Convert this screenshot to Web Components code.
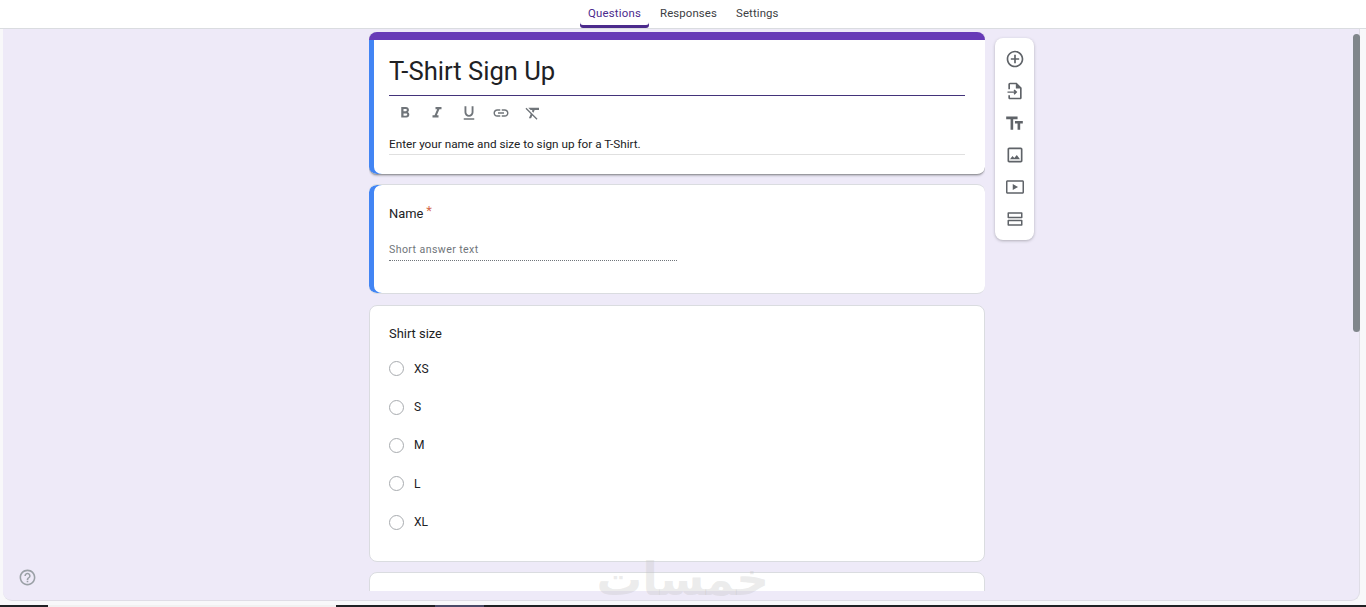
<!DOCTYPE html>
<html lang="en">
<head>
<meta charset="utf-8">
<title>T-Shirt Sign Up</title>
<style>
  html, body { margin: 0; height: 607px; overflow: hidden; }
  body { font-family: Roboto, "Liberation Sans", sans-serif; color: #202124; background: #f8f8fa; }
</style>
</head>
<body>
<form-page>
  <tab-bar slot="top">
    <tab-item active>Questions</tab-item>
    <tab-item>Responses</tab-item>
    <tab-item>Settings</tab-item>
  </tab-bar>

  <form-card kind="header">
    <title-editor heading="T-Shirt Sign Up" text="Enter your name and size to sign up for a T-Shirt."></title-editor>
  </form-card>

  <form-card kind="active" style="height:110px">
    <question-title required>Name</question-title>
    <short-answer>Short answer text</short-answer>
  </form-card>

  <form-card style="height:257px">
    <question-title>Shirt size</question-title>
    <radio-option>XS</radio-option>
    <radio-option>S</radio-option>
    <radio-option>M</radio-option>
    <radio-option>L</radio-option>
    <radio-option>XL</radio-option>
  </form-card>

  <form-card style="height:40px"></form-card>

  <side-tools slot="side"></side-tools>
</form-page>

<script>
/**** ICONOS */
const ICONS = {
  add: 'M13 7h-2v4H7v2h4v4h2v-4h4v-2h-4V7zm-1-5C6.48 2 2 6.48 2 12s4.48 10 10 10 10-4.48 10-10S17.52 2 12 2zm0 18c-4.41 0-8-3.59-8-8s3.59-8 8-8 8 3.59 8 8-3.59 8-8 8z',
  importq: 'M14 2H6c-1.1 0-2 .9-2 2v6h2V4h7v5h5v11H6v-3H4v3c0 1.1.9 2 2 2h12c1.1 0 2-.9 2-2V8l-6-6zM11.5 10.2l-1.2 1.2 1 1.1H3v1.7h8.3l-1 1.1 1.2 1.2 3.3-3.300z',
  title: 'M2.5 4v3h5v12h3V7h5V4h-13zm19 5h-9v3h3v7h3v-7h3V9z',
  image: 'M19 5v14H5V5h14m0-2H5c-1.1 0-2 .9-2 2v14c0 1.1.9 2 2 2h14c1.1 0 2-.9 2-2V5c0-1.1-.9-2-2-2zM14.14 11.86l-3 3.87L9 13.14 6 17h12l-3.86-5.14z',
  video: 'M22 3H2C.9 3 0 3.9 0 5v14c0 1.1.9 2 2 2h20c1.1 0 2-.9 2-2V5c0-1.100-.9-2-2-2zm0 16H2V5h20v14zM9 8v8l7-4z',
  section: 'M3 3h18c.6 0 1 .4 1 1v6c0 .6-.4 1-1 1H3c-.6 0-1-.4-1-1V4c0-.6.4-1 1-1zm1 2v4h16V5H4zm-1 8h18c.6 0 1 .4 1 1v6c0 .6-.4 1-1 1H3c-.6 0-1-.4-1-1v-6c0-.6.4-1 1-1zm1 2v4h16v-4H4z',
  bold: 'M15.6 10.79c.97-.67 1.65-1.77 1.65-2.79 0-2.26-1.75-4-4-4H7v14h7.04c2.09 0 3.71-1.7 3.71-3.79 0-1.52-.86-2.82-2.15-3.42zM10 6.5h3c.83 0 1.5.67 1.5 1.5s-.67 1.5-1.5 1.5h-3v-3zm3.5 9H10v-3h3.5c.83 0 1.5.67 1.5 1.5s-.67 1.5-1.5 1.5z',
  italic: 'M10 4v3h2.21l-3.42 8H6v3h8v-3h-2.21l3.42-8H18V4z',
  underline: 'M12 17c3.31 0 6-2.69 6-6V3h-2.5v8c0 1.93-1.57 3.5-3.5 3.5S8.5 12.93 8.5 11V3H6v8c0 3.31 2.69 6 6 6zm-7 2v2h14v-2H5z',
  link: 'M3.9 12c0-1.71 1.39-3.1 3.1-3.1h4V7H7c-2.76 0-5 2.24-5 5s2.24 5 5 5h4v-1.9H7c-1.71 0-3.1-1.39-3.1-3.1zM8 13h8v-2H8v2zm9-6h-4v1.9h4c1.71 0 3.1 1.39 3.1 3.1s-1.39 3.1-3.1 3.1h-4V17h4c2.76 0 5-2.24 5-5s-2.24-5-5-5z',
  clear: 'M3.27 5L2 6.27l6.97 6.97L6.5 19h3l1.57-3.66L16.73 21 18 19.73 3.55 5.27 3.27 5zM6 5v.18L8.82 8h2.4l-.72 1.68 2.1 2.1L14.21 8H20V5H6z',
  help: 'M11 18h2v-2h-2v2zm1-16C6.48 2 2 6.48 2 12s4.48 10 10 10 10-4.48 10-10S17.52 2 12 2zm0 18c-4.41 0-8-3.59-8-8s3.59-8 8-8 8 3.59 8 8-3.59 8-8 8zm0-14c-2.21 0-4 1.79-4 4h2c0-1.100.9-2 2-2s2 .9 2 2c0 2-3 1.750-3 5h2c0-2.250 3-2.500 3-5 0-2.210-1.790-4-4-4z'
}

class GfIcon extends HTMLElement {
  constructor(){
    super()
    const shadow = this.attachShadow({mode:'open'})
    const size = this.getAttribute('size') || 20
    const color = this.getAttribute('color') || '#5f6368'
    shadow.innerHTML = `
      <style>
        :host { display: inline-flex; width: ${size}px; height: ${size}px; }
        svg { width: 100%; height: 100%; fill: ${color}; display: block; }
      </style>
      <svg viewBox="0 0 24 24"><path d="${ICONS[this.getAttribute('name')]}"/></svg>
    `
  }
}
customElements.define('gf-icon', GfIcon)

/**** PAGINA */
class FormPage extends HTMLElement {
  constructor(){
    super()
    const shadow = this.attachShadow({mode:'open'})
    shadow.innerHTML = `
      <style>
        :host { display: flex; flex-direction: column; height: 607px; position: relative; }
        main {
          height: 572px; margin: 0 6px 0 3px; box-sizing: border-box;
          background: #eeeaf8; border-radius: 0 0 9px 9px;
          border: solid #dfdde6; border-width: 0 1px 1px 0;
          padding: 3px 0 10px 366px; display: flex; gap: 10px; overflow: hidden;
        }
        .scroll { width: 616px; height: 559px; overflow: hidden; flex: none; display: flex; flex-direction: column; }
        .side { padding-top: 6px; }
        .taskbar { margin-top: 4px; height: 2px; display: flex; background: #202124; }
        .taskbar i:nth-child(1) { width: 48px; }
        .taskbar i:nth-child(2) { width: 288px; background: #f1f1f1; }
        .taskbar i:nth-child(3) { width: 99px; }
        .taskbar i:nth-child(4) { width: 49px; background: #4a4a66; }
        .thumb { position: absolute; left: 1353px; top: 34px; width: 7px; height: 298px; border-radius: 4px; background: #80868b; }
        .help { position: absolute; left: 18px; top: 568px; }
        .mark {
          position: absolute; left: 603px; top: 549px; width: 166px; text-align: center;
          font: 700 45.500px/62px "DejaVu Sans", sans-serif; color: rgba(190,190,190,.3);
        }
      </style>
      <slot name="top"></slot>
      <main>
        <div class="scroll"><slot></slot></div>
        <div class="side"><slot name="side"></slot></div>
      </main>
      <div class="taskbar"><i></i><i></i><i></i><i></i></div>
      <div class="thumb"></div>
      <gf-icon class="help" name="help" size="19" color="#9aa0a6"></gf-icon>
      <div class="mark" dir="rtl" lang="ar">خمسات</div>
    `
  }
}
customElements.define('form-page', FormPage)

class TabBar extends HTMLElement {
  constructor(){
    super()
    const shadow = this.attachShadow({mode:'open'})
    shadow.innerHTML = `
      <style>
        :host {
          display: flex; height: 29px; box-sizing: border-box; background: #fff;
          border-bottom: 1px solid #dadce0; padding-left: 580px;
        }
      </style>
      <slot></slot>
    `
  }
}
customElements.define('tab-bar', TabBar)

class TabItem extends HTMLElement {
  constructor(){
    super()
    const shadow = this.attachShadow({mode:'open'})
    shadow.innerHTML = `
      <style>
        :host {
          display: block; height: 28px; box-sizing: border-box; padding: 0 8px;
          font: 400 11.400px/27px Roboto, sans-serif; letter-spacing: .12px; color: #3c4043;
          margin-right: 3px;
        }
        :host([active]) { color: #4b2a8c; width: 69px; box-shadow: inset 0 -3px 0 #4b2a8c; border-radius: 0 0 3px 3px; letter-spacing: .2px; }
      </style>
      <slot></slot>
    `
  }
}
customElements.define('tab-item', TabItem)

/**** TARJETAS */
class FormCard extends HTMLElement {
  constructor(){
    super()
    const shadow = this.attachShadow({mode:'open'})
    shadow.innerHTML = `
      <style>
        :host {
          display: block; flex: none; box-sizing: border-box; position: relative;
          background: #fff; border: 1px solid #dadce0; border-radius: 8px;
          padding: 19px 19px 0 19px; margin-bottom: 10px; overflow: hidden;
        }
        :host([kind="active"]), :host([kind="header"]) { border-left: 0; border-right: 0; padding-left: 20px; padding-right: 20px; }
        :host([kind="active"]) { margin-bottom: 11px; padding-top: 20px; box-shadow: inset 5px 0 0 #4285f4; }
        :host([kind="header"]) {
          height: 143px; margin-bottom: 9px; padding-top: 8px; border-top: 8px solid #673ab7;
          border-bottom: 1px solid #9a9aa0;
          box-shadow: inset 5px 0 0 #4285f4, 0 1px 2px rgba(60,64,67,.3);
        }
      </style>
      <slot></slot>
    `
  }
}
customElements.define('form-card', FormCard)

class TitleEditor extends HTMLElement {
  constructor(){
    super()
    const shadow = this.attachShadow({mode:'open'})
    const tools = ['bold','italic','underline','link','clear']
      .map(n => `<span><gf-icon name="${n}" size="18" color="#70757a"></gf-icon></span>`).join('')
    shadow.innerHTML = `
      <style>
        :host { display: block; }
        h1 {
          margin: 0; height: 48px; box-sizing: border-box; padding-top: 8px; border-bottom: 1px solid #43337a;
          font: 400 25.600px/30px Roboto, sans-serif; color: #202124;
        }
        .tools { display: flex; height: 34px; align-items: center; }
        .tools span { width: 32px; display: flex; justify-content: center; }
        p {
          margin: 0; height: 25px; box-sizing: border-box; padding-top: 6px;
          font: 400 11.750px/16px Roboto, sans-serif; color: #202124; border-bottom: 1px solid #e0e0e0;
        }
      </style>
      <h1>${this.getAttribute('heading')}</h1>
      <div class="tools">${tools}</div>
      <p>${this.getAttribute('text')}</p>
    `
  }
}
customElements.define('title-editor', TitleEditor)

class QuestionTitle extends HTMLElement {
  constructor(){
    super()
    const shadow = this.attachShadow({mode:'open'})
    const star = this.hasAttribute('required') ? '<b>*</b>' : ''
    shadow.innerHTML = `
      <style>
        :host { display: block; font: 400 12.900px/18px Roboto, sans-serif; color: #202124; height: 18px; margin-bottom: 6.500px; }
        b { font-weight: 400; color: #d4694c; font-size: 13px; margin-left: 3px; position: relative; top: -3px; }
      </style>
      <slot></slot>${star}
    `
  }
}
customElements.define('question-title', QuestionTitle)

class ShortAnswer extends HTMLElement {
  constructor(){
    super()
    const shadow = this.attachShadow({mode:'open'})
    shadow.innerHTML = `
      <style>
        :host {
          display: block; width: 288px; height: 23px; box-sizing: border-box; margin-top: 14.500px; padding-top: 3px;
          font: 400 10.600px/18px Roboto, sans-serif; letter-spacing: .4px; color: #70757a;
          border-bottom: 1px dotted #70757a;
        }
      </style>
      <slot></slot>
    `
  }
}
customElements.define('short-answer', ShortAnswer)

class RadioOption extends HTMLElement {
  constructor(){
    super()
    const shadow = this.attachShadow({mode:'open'})
    shadow.innerHTML = `
      <style>
        :host { display: flex; align-items: center; gap: 10px; height: 38.400px; font: 400 12px/16px Roboto, sans-serif; color: #202124; }
        i { width: 15px; height: 15px; box-sizing: border-box; border: 1px solid #a8abaf; border-radius: 50%; flex: none; }
      </style>
      <i></i><slot></slot>
    `
  }
}
customElements.define('radio-option', RadioOption)

class SideTools extends HTMLElement {
  constructor(){
    super()
    const shadow = this.attachShadow({mode:'open'})
    const sizes = {add: 20, importq: 20, title: 21, image: 20, video: 18, section: 18}
    const icons = Object.keys(sizes)
      .map(n => `<span><gf-icon name="${n}" size="${sizes[n]}"></gf-icon></span>`).join('')
    shadow.innerHTML = `
      <style>
        :host {
          display: flex; flex-direction: column; width: 39px; height: 202px; box-sizing: border-box;
          padding-top: 5px; background: #fff; border-radius: 8px; box-shadow: 0 1px 3px rgba(60,64,67,.35);
        }
        span { height: 32px; display: flex; align-items: center; justify-content: center; }
      </style>
      ${icons}
    `
  }
}
customElements.define('side-tools', SideTools)
</script>
</body>
</html>
